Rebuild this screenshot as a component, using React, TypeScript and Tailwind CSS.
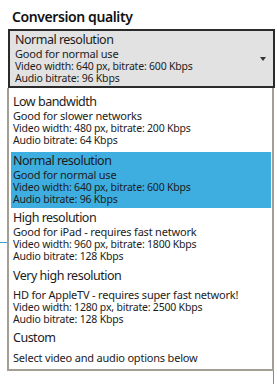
import React from 'react';

type Option = {
  title: string;
  desc: string;
  video?: string;
  audio?: string;
  selected?: boolean;
  box: string;
  gap?: string;
};

const options: Option[] = [
  {
    title: 'Low bandwidth',
    desc: 'Good for slower networks',
    video: 'Video width: 480 px, bitrate: 200 Kbps',
    audio: 'Audio bitrate: 64 Kbps',
    box: 'h-[58px]',
  },
  {
    title: 'Normal resolution',
    desc: 'Good for normal use',
    video: 'Video width: 640 px, bitrate: 600 Kbps',
    audio: 'Audio bitrate: 96 Kbps',
    selected: true,
    box: 'h-[56px] pt-[1px]',
  },
  {
    title: 'High resolution',
    desc: 'Good for iPad - requires fast network',
    video: 'Video width: 960 px, bitrate: 1800 Kbps',
    audio: 'Audio bitrate: 128 Kbps',
    box: 'h-[57px] pt-[2px]',
  },
  {
    title: 'Very high resolution',
    desc: 'HD for AppleTV - requires super fast network!',
    video: 'Video width: 1280 px, bitrate: 2500 Kbps',
    audio: 'Audio bitrate: 128 Kbps',
    box: 'h-[62px] pt-[3px]',
    gap: 'mt-[5px]',
  },
  {
    title: 'Custom',
    desc: 'Select video and audio options below',
    box: 'h-[42px] pt-[3px]',
    gap: 'mt-[6px]',
  },
];

function OptionBody({ o }: { o: Option }) {
  return (
    <div className="flex flex-col">
      <span className="text-[12.5px] leading-[16px] tracking-[-0.5px]">{o.title}</span>
      <span className={`text-[11px] leading-[12px] tracking-[-0.2px] ${o.gap ?? ''}`}>{o.desc}</span>
      {o.video && <span className="text-[10.5px] leading-[12px] tracking-[-0.2px]">{o.video}</span>}
      {o.audio && <span className="text-[10.5px] leading-[12px] tracking-[-0.2px]">{o.audio}</span>}
    </div>
  );
}

export default function App() {
  return (
    <div
      className="relative flex h-[384px] w-[277px] flex-col overflow-hidden bg-white text-[#1c1c1c]"
      style={{ fontFamily: '"Noto Sans", "Open Sans", sans-serif' }}
    >
      {/* edges of the page that lies behind the open list */}
      <div className="absolute left-0 top-[242px] h-px w-[8px] bg-[#3aa0d8]" />
      <div className="absolute left-[273px] top-[371px] h-[13px] w-px bg-[#3aa0d8]" />

      <h2 className="pl-[12px] pt-[7px] text-[14px] font-semibold leading-[20px] tracking-[-0.4px] text-[#111]">
        Conversion quality
      </h2>

      <div className="ml-[8px] mt-[2px] flex h-[59px] w-[267px] shrink-0 items-start justify-between border-2 border-[#2b2b2b] bg-[#e2e2e2] pl-[5px] pr-[7px] pt-[1px]">
        <OptionBody o={options[1]} />
        <span className="self-center border-x-[3px] border-t-[4px] border-x-transparent border-t-[#333]" />
      </div>

      <div className="relative z-10 ml-[7px] flex h-[283px] w-[267px] shrink-0 flex-col border-x-2 border-b-2 border-[#a59e92] bg-white pl-[2px] pr-[1px] pt-[6px]">
        {options.map((o) => (
          <div
            key={o.title}
            className={`shrink-0 pl-[2px] ${o.box} ${o.selected ? 'bg-[#3eaee0]' : ''}`}
          >
            <OptionBody o={o} />
          </div>
        ))}
      </div>
    </div>
  );
}
